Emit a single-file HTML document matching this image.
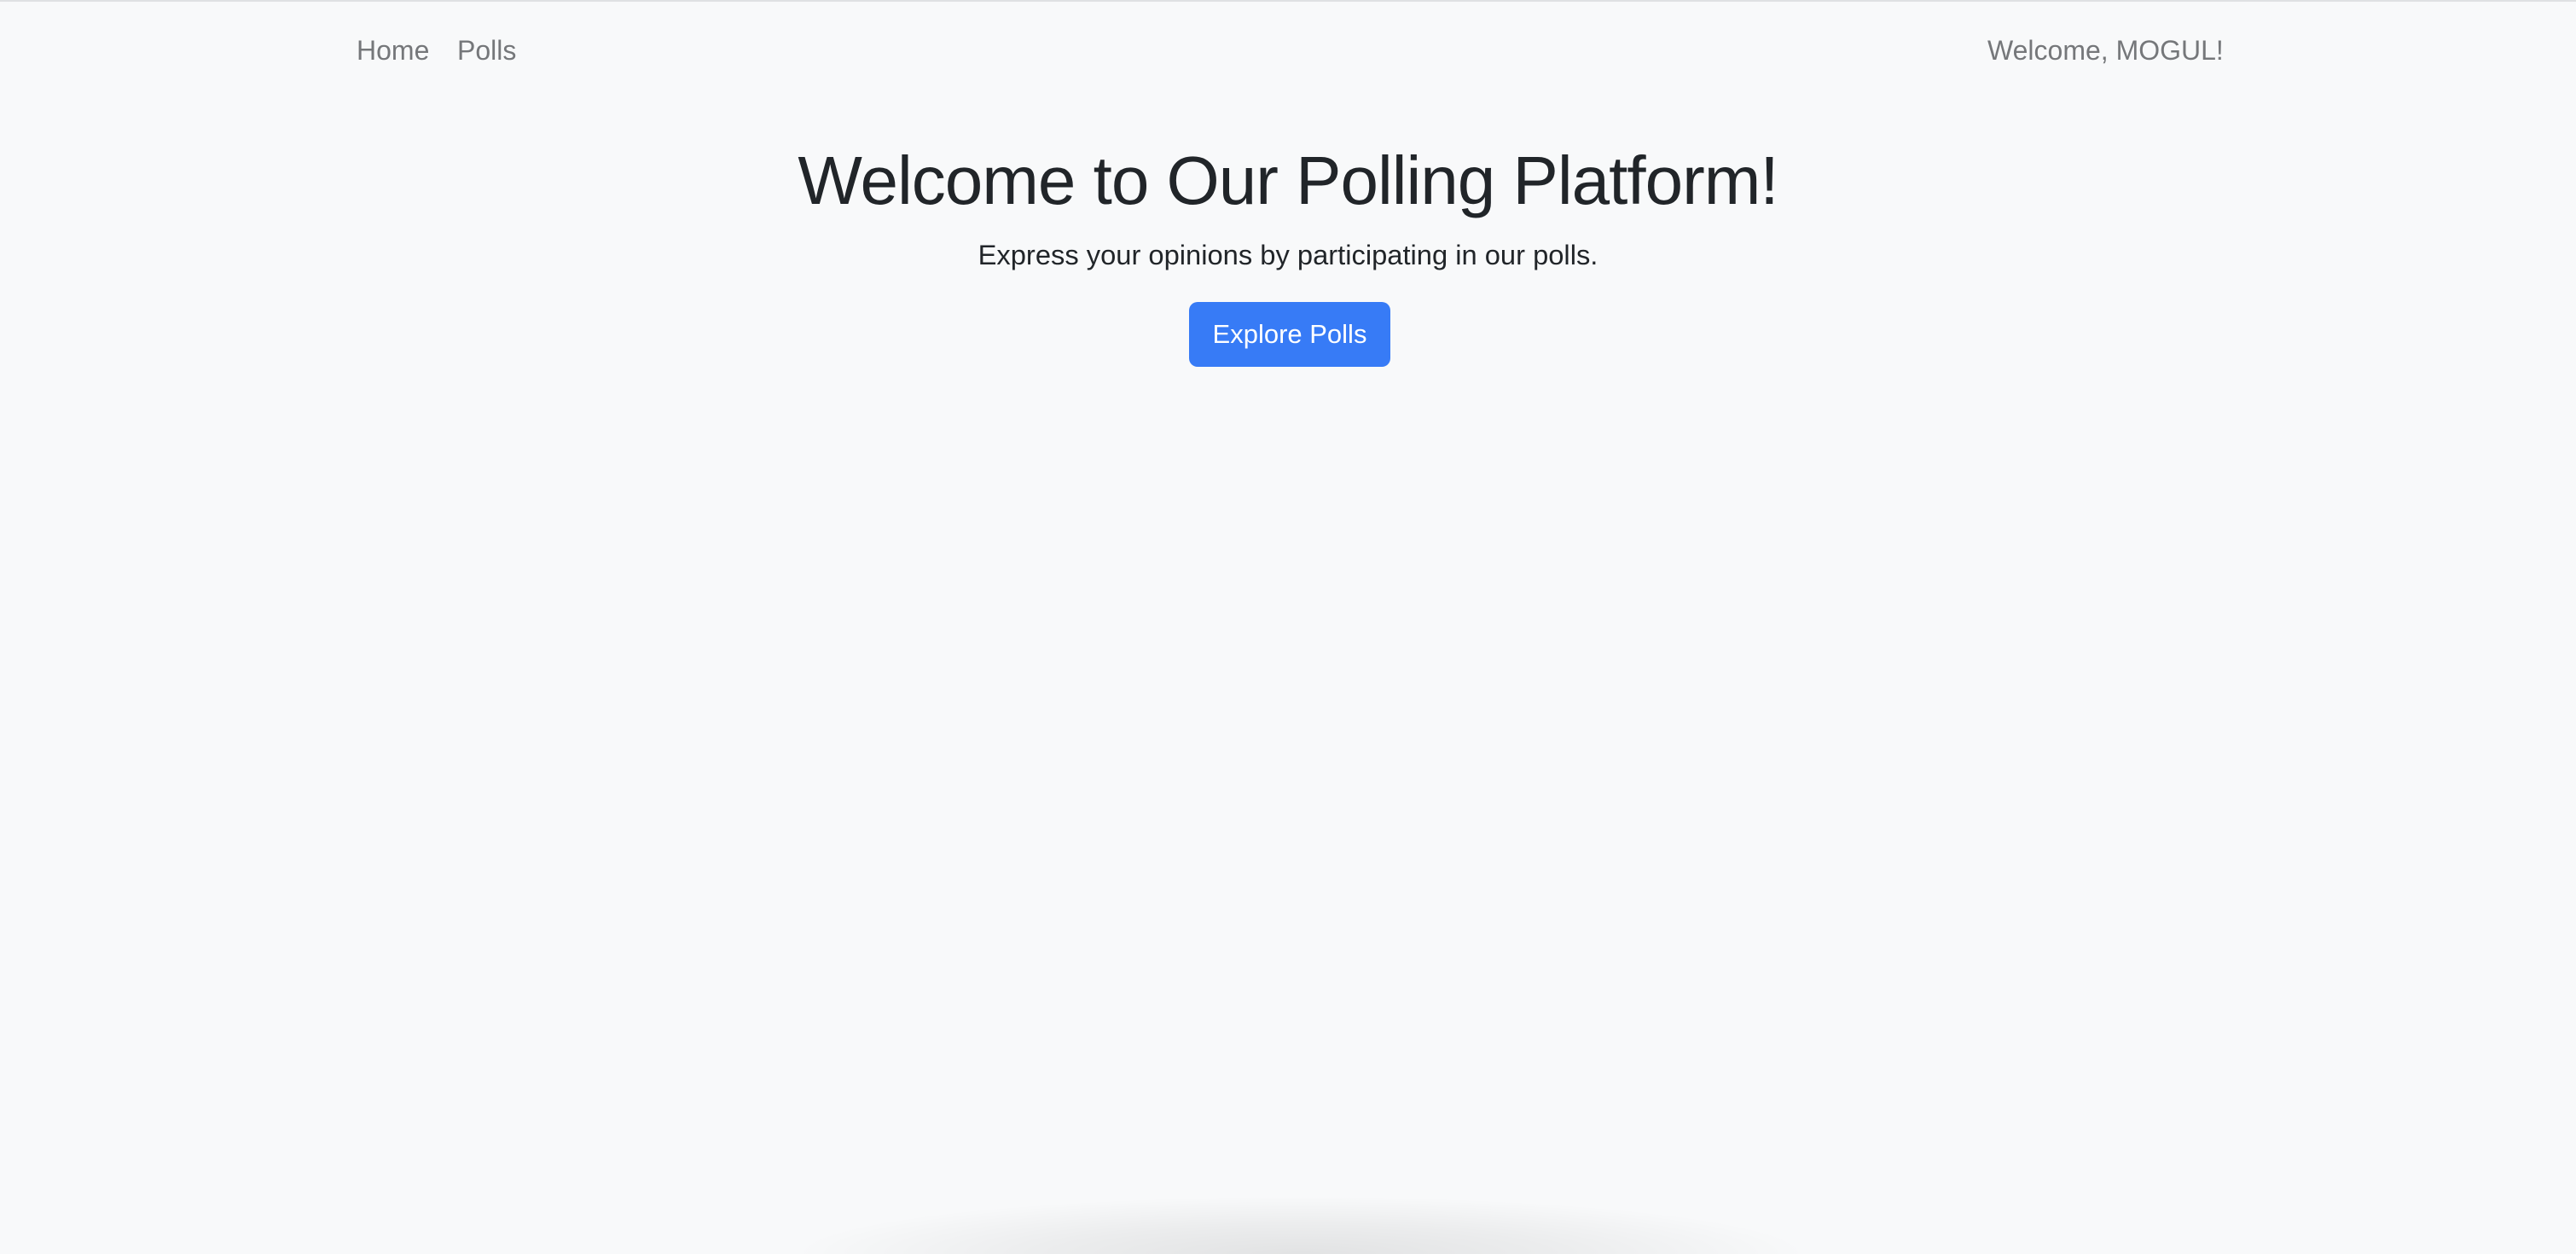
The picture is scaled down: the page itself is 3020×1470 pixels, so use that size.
<!DOCTYPE html>
<html><head><meta charset="utf-8"><style>
html{margin:0;padding:0;width:3020px;height:1470px;overflow:hidden;}
body{margin:0;padding:0;width:3020px;height:1470px;background:#f8f9fa;position:relative;overflow:hidden;font-family:"Liberation Sans",Arial,sans-serif;border-top:2px solid #dfe1e3;box-sizing:border-box;}
.nav{position:absolute;top:35px;font-size:32px;color:#75777a;line-height:44px;white-space:nowrap;}
h1{position:absolute;left:0;width:3020px;top:162px;margin:0;text-align:center;font-weight:400;font-size:80px;line-height:96px;color:#212529;letter-spacing:-1px;}
p{position:absolute;left:0;width:3020px;top:275px;margin:0;text-align:center;font-size:32.7px;line-height:44px;color:#212529;}
.btn{position:absolute;left:1394px;top:352px;width:236px;height:76px;background:#377bf6;border-radius:10px;color:#fff;font-size:31px;line-height:76px;text-align:center;}
.shadow{position:absolute;left:930px;top:1400px;width:1190px;height:68px;background:radial-gradient(ellipse 50% 100% at 50% 100%, rgba(0,0,0,0.09) 0%, rgba(0,0,0,0.05) 50%, rgba(0,0,0,0) 100%);}
</style></head><body>
<div class="nav" style="left:418px">Home</div>
<div class="nav" style="left:536px">Polls</div>
<div class="nav" style="left:2330px">Welcome, MOGUL!</div>
<h1>Welcome to Our Polling Platform!</h1>
<p>Express your opinions by participating in our polls.</p>
<div class="btn">Explore Polls</div>
<div class="shadow"></div>
</body></html>
